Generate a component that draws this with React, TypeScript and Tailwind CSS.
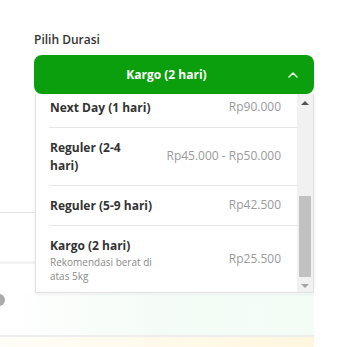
import { ChevronUp } from 'lucide-react';

interface Option {
  title: string;
  note?: string;
  price: string;
}

const options: Option[] = [
  { title: 'Next Day (1 hari)', price: 'Rp90.000' },
  { title: 'Reguler (2-4 hari)', price: 'Rp45.000 - Rp50.000' },
  { title: 'Reguler (5-9 hari)', price: 'Rp42.500' },
  { title: 'Kargo (2 hari)', note: 'Rekomendasi berat di atas 5kg', price: 'Rp25.500' },
];

function OptionRow({ option, last }: { option: Option; last: boolean }) {
  return (
    <li
      className={`ml-[13px] flex items-center justify-between gap-[16px] pl-[1px] pr-[16px] ${
        last ? 'py-[11px]' : 'border-b border-[#e6e6e6] pb-[10px] pt-[11px]'
      }`}
    >
      <div className="min-w-0 max-w-[112px]">
        <div className="text-[12px] font-bold leading-[18px] text-[#333333]">{option.title}</div>
        {option.note && (
          <div className="text-[10px] leading-[14px] text-[#8a8a8a]">{option.note}</div>
        )}
      </div>
      <span className="-mt-[2px] shrink-0 text-[12px] leading-[18px] text-[#9a9a9a]">{option.price}</span>
    </li>
  );
}

function Scrollbar() {
  return (
    <div className="flex w-[16px] shrink-0 flex-col items-center bg-[#f1f1f1]">
      <div className="mt-[7px] h-0 w-0 border-x-[4px] border-b-[4px] border-x-transparent border-b-[#505050]" />
      <div className="mt-[91px] h-[81px] w-[12px] bg-[#c1c1c1]" />
      <div className="mt-[7px] h-0 w-0 border-x-[4px] border-t-[4px] border-x-transparent border-t-[#a3a3a3]" />
    </div>
  );
}

export default function App() {
  return (
    <div className="relative h-[347px] w-[347px] overflow-hidden bg-white font-['Open_Sans',sans-serif]">
      <div className="w-[314px] pl-[34px] pt-[32px]">
        <div className="text-[12px] font-semibold leading-[16px] text-[#333333]">Pilih Durasi</div>
        <button
          type="button"
          className="mt-[7px] flex h-[39px] w-full items-center rounded-[8px] bg-[#0b9f0d] pl-[14px] pr-[13px] text-white"
        >
          <span className="flex-1 text-center text-[12px] font-bold">Kargo (2 hari)</span>
          <ChevronUp className="h-[16px] w-[16px] text-[#d9f5d9]" strokeWidth={2.4} />
        </button>
      </div>

      {/* page content behind the open list */}
      <div className="w-[314px]">
        <div className="h-[118px]" />
        <div className="h-px bg-[#e4e4e4]" />
        <div className="h-[48px]" />
        <div className="h-[3px] bg-[#f3f3f3]" />
        <div className="h-[30px]" />
        <div className="relative h-[41px] bg-gradient-to-r from-white via-[#f5fcf7] to-[#f3fdf6]">
          <div className="absolute -left-[7px] top-[0px] h-[12px] w-[12px] rounded-full bg-[#ababab]" />
        </div>
        <div className="h-[2px] bg-[#eeeeee]" />
        <div className="h-[10px] bg-gradient-to-r from-[#fffdf7] to-[#fff6de]" />
      </div>

      <div className="absolute left-[35px] top-[94px] flex h-[199px] w-[279px] overflow-hidden border border-t-0 border-[#e2e2e2] bg-white shadow-[0_1px_3px_rgba(0,0,0,0.08)]">
        <ul className="-mt-[6px] min-w-0 flex-1">
          {options.map((o, i) => (
            <OptionRow key={o.title} option={o} last={i === options.length - 1} />
          ))}
        </ul>
        <Scrollbar />
      </div>
    </div>
  );
}
